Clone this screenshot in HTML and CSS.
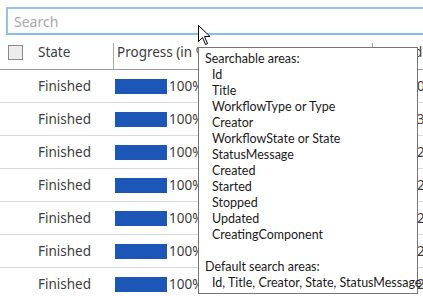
FILE: index.html
```html
<!DOCTYPE html>
<html lang="en">
  <head>
    <meta charset="UTF-8" />
    <title>Workflows</title>
    <link rel="stylesheet" href="styles.css">
  </head>
  <body>
    <main class="page">
      <div class="search">
        <input type="text" class="search-input" placeholder="Search" />
      </div>
      <div class="grid">
        <div class="row head">
          <div class="cell check"><span class="box"></span></div>
          <div class="cell state">State</div>
          <div class="cell progress">Progress (in %)</div>
          <div class="cell date">Started</div>
        </div>
        <div class="row">
          <div class="cell check"></div>
          <div class="cell state">Finished</div>
          <div class="cell progress"><span class="bar"></span>100%</div>
          <div class="cell date">0</div>
        </div>
        <div class="row">
          <div class="cell check"></div>
          <div class="cell state">Finished</div>
          <div class="cell progress"><span class="bar"></span>100%</div>
          <div class="cell date">3</div>
        </div>
        <div class="row">
          <div class="cell check"></div>
          <div class="cell state">Finished</div>
          <div class="cell progress"><span class="bar"></span>100%</div>
          <div class="cell date">2</div>
        </div>
        <div class="row">
          <div class="cell check"></div>
          <div class="cell state">Finished</div>
          <div class="cell progress"><span class="bar"></span>100%</div>
          <div class="cell date">2</div>
        </div>
        <div class="row">
          <div class="cell check"></div>
          <div class="cell state">Finished</div>
          <div class="cell progress"><span class="bar"></span>100%</div>
          <div class="cell date">2</div>
        </div>
        <div class="row">
          <div class="cell check"></div>
          <div class="cell state">Finished</div>
          <div class="cell progress"><span class="bar"></span>100%</div>
          <div class="cell date">2</div>
        </div>
        <div class="row">
          <div class="cell check"></div>
          <div class="cell state">Finished</div>
          <div class="cell progress"><span class="bar"></span>100%</div>
          <div class="cell date">2</div>
        </div>
      </div>

      <!-- tooltip over the search box -->
      <div class="tip">
        <div class="tip-title">Searchable areas:</div>
        <ul class="tip-list">
          <li>Id</li>
          <li>Title</li>
          <li>WorkflowType or Type</li>
          <li>Creator</li>
          <li>WorkflowState or State</li>
          <li>StatusMessage</li>
          <li>Created</li>
          <li>Started</li>
          <li>Stopped</li>
          <li>Updated</li>
          <li>CreatingComponent</li>
        </ul>
        <div class="tip-title gap">Default search areas:</div>
        <ul class="tip-list">
          <li>Id, Title, Creator, State, StatusMessage</li>
        </ul>
      </div>

      <svg class="pointer" width="13" height="21" viewBox="0 0 13 21">
        <path d="M0.5 0.5 L0.5 16.5 L4.5 12.5 L7.5 19.5 L9.5 18.5 L6.5 11.5 L12 11.5 Z"
          fill="#fff" stroke="#000" stroke-width="1" stroke-linejoin="miter" />
      </svg>
    </main>
  </body>
</html>
```

FILE: styles.css
```css
* {
  margin: 0;
  padding: 0;
  box-sizing: border-box;
}
body {
  background: #fff;
  font-family: "Noto Sans", "Open Sans", sans-serif;
  color: #3c3c3c;
  overflow: hidden;
}
.page {
  position: relative;
  width: 423px;
  height: 296px;
  overflow: hidden;
}
.search {
  padding: 7px 0 0 6px;
  width: 440px;
}
.search-input {
  display: block;
  width: 100%;
  height: 28px;
  border: 2px solid #8fc3f0;
  border-bottom-color: #86bbea;
  outline: none;
  padding: 0 6px;
  font-family: "Noto Sans", sans-serif;
  font-size: 14px;
  color: #333;
  caret-color: #000;
}
.search-input::placeholder {
  color: #a8a8a8;
}
.grid {
  margin-top: 1px;
  width: 440px;
}
.row {
  display: flex;
  height: 33px;
  border-bottom: 1px solid #d9d9d9;
  font-size: 13.5px;
}
.row.head {
  height: 34px;
  border-bottom-color: #9a9a9a;
}
.cell {
  display: flex;
  align-items: center;
  white-space: nowrap;
  overflow: hidden;
}
.check {
  width: 37px;
  padding-left: 8px;
}
.box {
  width: 15px;
  height: 15px;
  border: 1px solid #8a8a8a;
  background: #ececec;
}
.state {
  width: 76px;
  padding-left: 1px;
}
.progress {
  width: 259px;
  padding-left: 2px;
}
.date {
  padding-left: 45px;
}
.head .cell {
  padding-bottom: 1px;
}
.head .progress,
.head .date {
  position: relative;
  padding-left: 4px;
}
.head .progress::before,
.head .date::before {
  content: "";
  position: absolute;
  left: 0;
  top: 7px;
  bottom: 0;
  border-left: 1px solid #a8a8a8;
}
.bar {
  display: inline-block;
  width: 52px;
  height: 15px;
  background: #1c57b8;
  margin-right: 2px;
}
.tip {
  position: absolute;
  left: 198px;
  top: 47px;
  width: 220px;
  height: 247px;
  background: #fff;
  border: 1px solid #767676;
  padding: 3px 0 0 6px;
  font-family: Lato, "Noto Sans", sans-serif;
  font-size: 12.5px;
  line-height: 16px;
  color: #1a1a1a;
  white-space: nowrap;
}
.tip-list {
  list-style: none;
  padding-left: 7px;
}
.tip-title.gap {
  margin-top: 16px;
}
.pointer {
  position: absolute;
  left: 198px;
  top: 25px;
}
```
